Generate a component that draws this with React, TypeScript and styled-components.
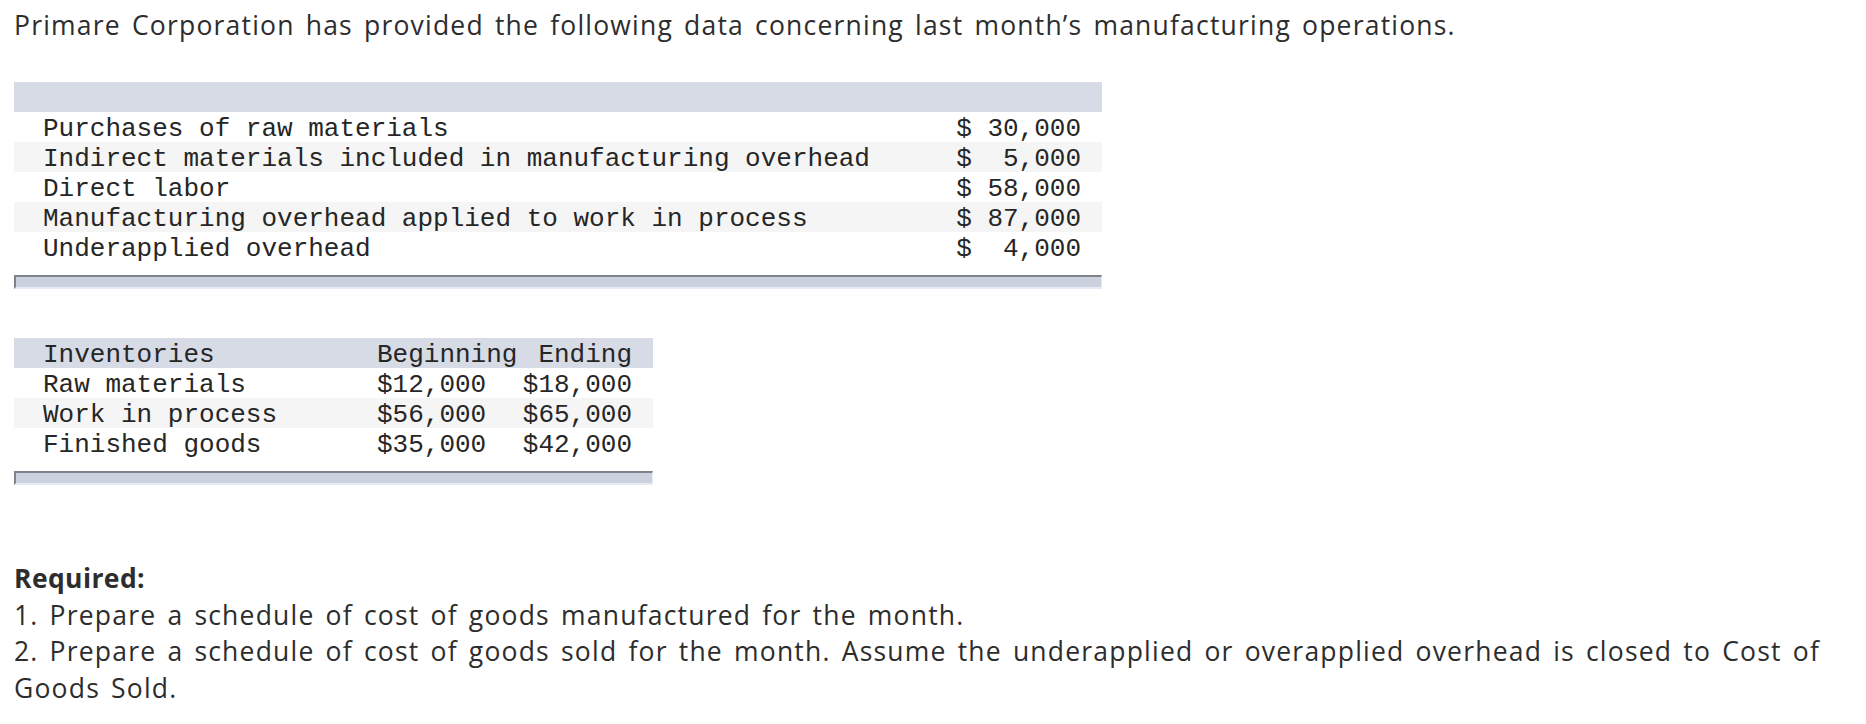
import React from "react";
import styled, { createGlobalStyle } from "styled-components";

const Global = createGlobalStyle`
  html, body { margin: 0; padding: 0; background: #ffffff; }
  body { font-family: "Open Sans", "Lato", sans-serif; color: #2b2b2b; }
`;

const Page = styled.div`
  padding: 7px 14px 0 14px;
  width: 1866px;
  box-sizing: border-box;
`;

const Intro = styled.p`
  margin: 0;
  font-family: "Open Sans", sans-serif;
  font-size: 26.5px;
  letter-spacing: 1.2px;
  word-spacing: 3px;
  line-height: 36px;
  color: #2d2d2d;
`;

const DataTable = styled.div<{ $width: number; $top: number }>`
  width: ${(p) => p.$width}px;
  margin-top: ${(p) => p.$top}px;
  font-family: "Liberation Mono", "Courier New", monospace;
  font-size: 26px;
  color: #262626;
`;

const Row = styled.div<{ $cols: string; $variant?: "head" | "stripe" | "plain" }>`
  display: grid;
  grid-template-columns: ${(p) => p.$cols};
  height: 30px;
  box-sizing: border-box;
  padding: 5px 21px 0 29px;
  line-height: 25px;
  white-space: pre;
  background: ${(p) =>
    p.$variant === "head" ? "#d6dbe6" : p.$variant === "stripe" ? "#f5f5f5" : "#ffffff"};
`;

const Cell = styled.span<{ $align?: "left" | "right" }>`
  text-align: ${(p) => p.$align ?? "left"};
`;

const Footer = styled.div<{ $gap: number }>`
  margin-top: ${(p) => p.$gap}px;
  height: 14px;
  box-sizing: border-box;
  background: #cbd2de;
  border-top: 2px solid #7f838b;
  border-left: 2px solid #7f838b;
  border-right: 1px solid #e6ecf6;
  border-bottom: 2px solid #e6ecf6;
`;

const Required = styled.div`
  margin-top: 75px;
  font-family: "Open Sans", sans-serif;
  font-size: 26.5px;
  letter-spacing: 1.2px;
  word-spacing: 3px;
  line-height: 36.6px;
  color: #2d2d2d;
`;

const Heading = styled.div`
  font-weight: 700;
  letter-spacing: 0.4px;
`;

const Line = styled.div``;

const costs: [string, string][] = [
  ["Purchases of raw materials", "$ 30,000"],
  ["Indirect materials included in manufacturing overhead", "$  5,000"],
  ["Direct labor", "$ 58,000"],
  ["Manufacturing overhead applied to work in process", "$ 87,000"],
  ["Underapplied overhead", "$  4,000"],
];

const inventories: [string, string, string][] = [
  ["Raw materials", "$12,000", "$18,000"],
  ["Work in process", "$56,000", "$65,000"],
  ["Finished goods", "$35,000", "$42,000"],
];

const COLS1 = "1fr auto";
const COLS2 = "334px 139px 1fr";

export default function App() {
  return (
    <>
      <Global />
      <Page>
        <Intro>
          Primare Corporation has provided the following data concerning last month’s manufacturing
          operations.
        </Intro>

        <DataTable $width={1088} $top={39}>
          <Row $cols={COLS1} $variant="head">
            <Cell> </Cell>
            <Cell> </Cell>
          </Row>
          {costs.map(([label, value], i) => (
            <Row key={label} $cols={COLS1} $variant={i % 2 === 1 ? "stripe" : "plain"}>
              <Cell>{label}</Cell>
              <Cell $align="right">{value}</Cell>
            </Row>
          ))}
          <Footer $gap={13} />
        </DataTable>

        <DataTable $width={639} $top={49}>
          <Row $cols={COLS2} $variant="head">
            <Cell>Inventories</Cell>
            <Cell>Beginning</Cell>
            <Cell $align="right">Ending</Cell>
          </Row>
          {inventories.map(([label, begin, end], i) => (
            <Row key={label} $cols={COLS2} $variant={i % 2 === 1 ? "stripe" : "plain"}>
              <Cell>{label}</Cell>
              <Cell>{begin}</Cell>
              <Cell $align="right">{end}</Cell>
            </Row>
          ))}
          <Footer $gap={13} />
        </DataTable>

        <Required>
          <Heading>Required:</Heading>
          <Line>1. Prepare a schedule of cost of goods manufactured for the month.</Line>
          <Line>
            2. Prepare a schedule of cost of goods sold for the month. Assume the underapplied or
            overapplied overhead is closed to Cost of Goods Sold.
          </Line>
        </Required>
      </Page>
    </>
  );
}
